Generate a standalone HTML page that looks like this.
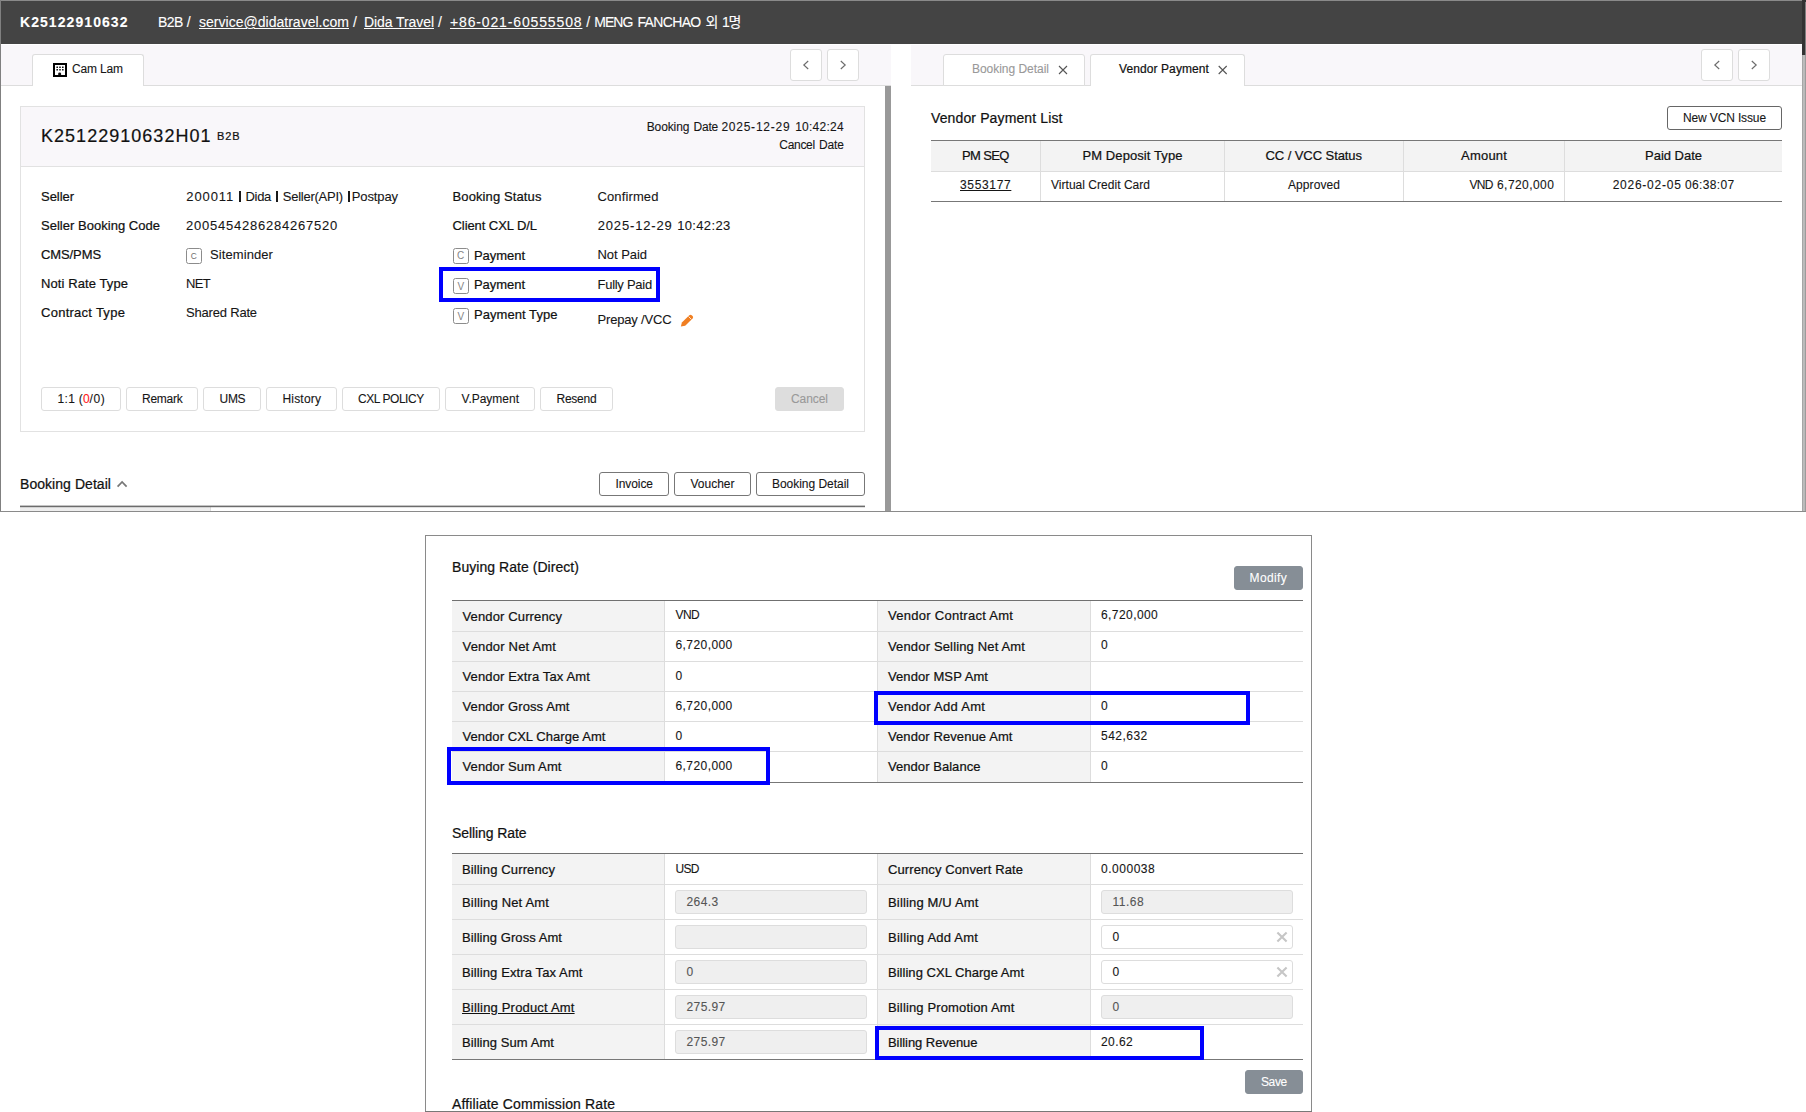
<!DOCTYPE html>
<html lang="en"><head><meta charset="utf-8"><title>Booking K25122910632</title>
<style>
html,body{margin:0;padding:0;background:#fff;}
body{width:1806px;height:1112px;position:relative;overflow:hidden;font-family:"Liberation Sans", "Noto Sans CJK KR", sans-serif;color:#161616;}
.b{position:absolute;box-sizing:border-box;}
.t{position:absolute;white-space:pre;line-height:1;font-family:"Liberation Sans", "Noto Sans CJK KR", sans-serif;}
svg{position:absolute;overflow:visible;}
</style></head><body>
<div class="b" style="left:0px;top:0px;width:1806px;height:512px;background:#fff;"></div>
<div class="b" style="left:0px;top:0px;width:1802px;height:43.6px;background:#444444;"></div>
<div class="b" style="left:0px;top:0px;width:1806px;height:1px;background:#8a8a8a;"></div>
<div class="b" style="left:1802px;top:0px;width:4px;height:55px;background:#333333;"></div>
<div class="b" style="left:1805px;top:2px;width:1px;height:53px;background:#808080;"></div>
<div class="b" style="left:1802px;top:55px;width:4px;height:457px;background:linear-gradient(90deg,#9a9a9a 0,#c8c8c8 50%,#8c8c8c 100%);"></div>
<div class="b" style="left:0px;top:0px;width:1px;height:512px;background:#808080;"></div>
<div class="b" style="left:0px;top:511px;width:1806px;height:1px;background:#8a8a8a;"></div>
<div class="b" style="left:1px;top:45px;width:890px;height:41px;background:#f9f7fa;"></div>
<div class="b" style="left:1px;top:85px;width:890px;height:1px;background:#dddddd;"></div>
<div class="b" style="left:32px;top:54px;width:112px;height:32px;background:#fff;border:1px solid #dddddd;border-bottom:none;border-radius:3px 3px 0 0;"></div>
<svg style="left:53px;top:63px" width="14" height="14" viewBox="0 0 14 14">
<rect x="1" y="1" width="12" height="12" fill="#fff" stroke="#000" stroke-width="2"/>
<g fill="#111"><rect x="3.4" y="3.5" width="1.6" height="1.6" rx="0.3"/><rect x="6.2" y="3.5" width="1.6" height="1.6" rx="0.3"/><rect x="9.0" y="3.5" width="1.6" height="1.6" rx="0.3"/>
<rect x="3.4" y="6.0" width="1.6" height="1.6" rx="0.3"/><rect x="6.2" y="6.0" width="1.6" height="1.6" rx="0.3"/><rect x="9.0" y="6.0" width="1.6" height="1.6" rx="0.3"/>
<path d="M5.2,12.2 V10.7 Q5.2,9.4 6.65,9.4 Q8.1,9.4 8.1,10.7 V12.2 Z"/></g></svg>
<div class="b" style="left:790px;top:49px;width:32px;height:32px;background:#fff;border:1px solid #dddddd;border-radius:3px;"></div>
<div class="b" style="left:827px;top:49px;width:32px;height:32px;background:#fff;border:1px solid #dddddd;border-radius:3px;"></div>
<svg style="left:0;top:0" width="1" height="1"><path d="M808.2,61 L803.8,65 L808.2,69" fill="none" stroke="#6c6c6c" stroke-width="1.15"/></svg>
<svg style="left:0;top:0" width="1" height="1"><path d="M840.8,61 L845.2,65 L840.8,69" fill="none" stroke="#6c6c6c" stroke-width="1.15"/></svg>
<div class="b" style="left:885px;top:86px;width:6px;height:425px;background:#999999;"></div>
<div class="b" style="left:20px;top:106px;width:845px;height:326px;background:#fff;border:1px solid #e2e2e2;"></div>
<div class="b" style="left:21px;top:107px;width:843px;height:59px;background:#f9f7fa;"></div>
<div class="b" style="left:21px;top:166px;width:843px;height:1px;background:#e2e2e2;"></div>
<div class="b" style="left:238.8px;top:191.3px;width:2.0px;height:10.5px;background:#1a1a1a;"></div>
<div class="b" style="left:276.1px;top:191.3px;width:2.0px;height:10.5px;background:#1a1a1a;"></div>
<div class="b" style="left:348.2px;top:191.3px;width:2.0px;height:10.5px;background:#1a1a1a;"></div>
<div class="b" style="left:186px;top:248px;width:16px;height:16px;background:#fff;border:1px solid #8c8c8c;border-radius:2.5px;"></div>
<div class="b" style="left:453px;top:248px;width:16px;height:16px;background:#fff;border:1px solid #8c8c8c;border-radius:2.5px;"></div>
<div class="b" style="left:453px;top:278px;width:16px;height:16px;background:#fff;border:1px solid #8c8c8c;border-radius:2.5px;"></div>
<div class="b" style="left:453px;top:308px;width:16px;height:16px;background:#fff;border:1px solid #8c8c8c;border-radius:2.5px;"></div>
<svg style="left:680px;top:314px" width="14" height="13" viewBox="0 0 14 13">
<path d="M0.9,12.4 L1.9,8.6 L9.3,1.2 Q10.5,0.1 11.7,1.2 L12.6,2.1 Q13.7,3.3 12.6,4.4 L5.2,11.7 Z" fill="#f07f22"/>
<path d="M8.5,2.5 L11.3,5.3" stroke="#fff" stroke-width="0.8"/></svg>
<div class="b" style="left:439px;top:267px;width:221px;height:35px;border:4px solid #0000ff;"></div>
<div class="b" style="left:41px;top:387px;width:80px;height:24px;background:#fff;border:1px solid #dddddd;border-radius:3px;"></div>
<div class="b" style="left:126px;top:387px;width:72px;height:24px;background:#fff;border:1px solid #dddddd;border-radius:3px;"></div>
<div class="b" style="left:203px;top:387px;width:58px;height:24px;background:#fff;border:1px solid #dddddd;border-radius:3px;"></div>
<div class="b" style="left:266px;top:387px;width:71px;height:24px;background:#fff;border:1px solid #dddddd;border-radius:3px;"></div>
<div class="b" style="left:342px;top:387px;width:98px;height:24px;background:#fff;border:1px solid #dddddd;border-radius:3px;"></div>
<div class="b" style="left:445px;top:387px;width:90px;height:24px;background:#fff;border:1px solid #dddddd;border-radius:3px;"></div>
<div class="b" style="left:540px;top:387px;width:73px;height:24px;background:#fff;border:1px solid #dddddd;border-radius:3px;"></div>
<div class="b" style="left:775px;top:387px;width:69px;height:24px;background:#dddddd;border:1px solid #dddddd;border-radius:3px;"></div>
<svg style="left:0;top:0" width="1" height="1"><path d="M117.6,486.6 L122.1,482 L126.6,486.6" fill="none" stroke="#777" stroke-width="1.7"/></svg>
<div class="b" style="left:599px;top:472px;width:70px;height:24px;background:#fff;border:1px solid #777;border-radius:3px;"></div>
<div class="b" style="left:674px;top:472px;width:77px;height:24px;background:#fff;border:1px solid #777;border-radius:3px;"></div>
<div class="b" style="left:756px;top:472px;width:109px;height:24px;background:#fff;border:1px solid #777;border-radius:3px;"></div>
<div class="b" style="left:20px;top:507px;width:190px;height:4px;background:#eeeeee;"></div>
<div class="b" style="left:210px;top:507px;width:1px;height:4px;background:#dddddd;"></div>
<svg style="left:0;top:0" width="1" height="1"><rect x="20" y="505.6" width="845" height="1.6" fill="#6c6c6c"/></svg>
<div class="b" style="left:911px;top:45px;width:891px;height:41px;background:#f9f7fa;"></div>
<div class="b" style="left:911px;top:85px;width:891px;height:1px;background:#dddddd;"></div>
<div class="b" style="left:943px;top:54px;width:142px;height:32px;background:#fff;border:1px solid #dddddd;border-radius:3px 3px 0 0;"></div>
<div class="b" style="left:1090px;top:54px;width:155px;height:32px;background:#fff;border:1px solid #dddddd;border-bottom:none;border-radius:3px 3px 0 0;"></div>
<svg style="left:0;top:0" width="1" height="1"><path d="M1059,66 L1067,74 M1067,66 L1059,74" fill="none" stroke="#555" stroke-width="1.1"/></svg>
<svg style="left:0;top:0" width="1" height="1"><path d="M1218.7,66 L1226.7,74 M1226.7,66 L1218.7,74" fill="none" stroke="#555" stroke-width="1.1"/></svg>
<div class="b" style="left:1701px;top:49px;width:32px;height:32px;background:#fff;border:1px solid #dddddd;border-radius:3px;"></div>
<div class="b" style="left:1738px;top:49px;width:32px;height:32px;background:#fff;border:1px solid #dddddd;border-radius:3px;"></div>
<svg style="left:0;top:0" width="1" height="1"><path d="M1719.2,61 L1714.8,65 L1719.2,69" fill="none" stroke="#6c6c6c" stroke-width="1.15"/></svg>
<svg style="left:0;top:0" width="1" height="1"><path d="M1751.8,61 L1756.2,65 L1751.8,69" fill="none" stroke="#6c6c6c" stroke-width="1.15"/></svg>
<div class="b" style="left:1667px;top:106px;width:115px;height:24px;background:#fff;border:1px solid #666;border-radius:3px;"></div>
<div class="b" style="left:931px;top:140px;width:851px;height:1px;background:#777777;"></div>
<div class="b" style="left:931px;top:141px;width:851px;height:30px;background:#f3f3f3;"></div>
<div class="b" style="left:931px;top:171px;width:851px;height:1px;background:#dddddd;"></div>
<div class="b" style="left:931px;top:201px;width:851px;height:1px;background:#777777;"></div>
<div class="b" style="left:1040px;top:141px;width:1px;height:60px;background:#dddddd;"></div>
<div class="b" style="left:1224px;top:141px;width:1px;height:60px;background:#dddddd;"></div>
<div class="b" style="left:1403px;top:141px;width:1px;height:60px;background:#dddddd;"></div>
<div class="b" style="left:1564px;top:141px;width:1px;height:60px;background:#dddddd;"></div>
<div class="b" style="left:425px;top:535px;width:887px;height:578px;background:#fff;border:1px solid #8a8a8a;"></div>
<div class="b" style="left:425px;top:1111px;width:887px;height:1px;background:#777;"></div>
<div class="b" style="left:1234px;top:566px;width:69px;height:24px;background:#868e96;border:1px solid #868e96;border-radius:3px;"></div>
<div class="b" style="left:452px;top:600px;width:851px;height:1px;background:#707070;"></div>
<div class="b" style="left:452px;top:601px;width:212px;height:181px;background:#f3f3f3;"></div>
<div class="b" style="left:878px;top:601px;width:212px;height:181px;background:#f3f3f3;"></div>
<div class="b" style="left:452px;top:631px;width:851px;height:1px;background:#dddddd;"></div>
<div class="b" style="left:452px;top:661px;width:851px;height:1px;background:#dddddd;"></div>
<div class="b" style="left:452px;top:691px;width:851px;height:1px;background:#dddddd;"></div>
<div class="b" style="left:452px;top:721px;width:851px;height:1px;background:#dddddd;"></div>
<div class="b" style="left:452px;top:751px;width:851px;height:1px;background:#dddddd;"></div>
<div class="b" style="left:452px;top:782px;width:851px;height:1px;background:#777777;"></div>
<div class="b" style="left:664px;top:601px;width:1px;height:181px;background:#dddddd;"></div>
<div class="b" style="left:877px;top:601px;width:1px;height:181px;background:#dddddd;"></div>
<div class="b" style="left:1090px;top:601px;width:1px;height:181px;background:#dddddd;"></div>
<div class="b" style="left:874px;top:691px;width:376px;height:34px;border:4px solid #0000ff;"></div>
<div class="b" style="left:447px;top:747px;width:323px;height:38px;border:4px solid #0000ff;"></div>
<div class="b" style="left:452px;top:853px;width:851px;height:1px;background:#707070;"></div>
<div class="b" style="left:452px;top:854px;width:212px;height:205px;background:#f3f3f3;"></div>
<div class="b" style="left:878px;top:854px;width:212px;height:205px;background:#f3f3f3;"></div>
<div class="b" style="left:452px;top:884px;width:851px;height:1px;background:#dddddd;"></div>
<div class="b" style="left:452px;top:919px;width:851px;height:1px;background:#dddddd;"></div>
<div class="b" style="left:452px;top:954px;width:851px;height:1px;background:#dddddd;"></div>
<div class="b" style="left:452px;top:989px;width:851px;height:1px;background:#dddddd;"></div>
<div class="b" style="left:452px;top:1024px;width:851px;height:1px;background:#dddddd;"></div>
<div class="b" style="left:452px;top:1059px;width:851px;height:1px;background:#777777;"></div>
<div class="b" style="left:664px;top:854px;width:1px;height:205px;background:#dddddd;"></div>
<div class="b" style="left:877px;top:854px;width:1px;height:205px;background:#dddddd;"></div>
<div class="b" style="left:1090px;top:854px;width:1px;height:205px;background:#dddddd;"></div>
<div class="b" style="left:675px;top:890px;width:192px;height:24px;background:#efefef;border:1px solid #dddddd;border-radius:3px;"></div>
<div class="b" style="left:675px;top:925px;width:192px;height:24px;background:#efefef;border:1px solid #dddddd;border-radius:3px;"></div>
<div class="b" style="left:675px;top:960px;width:192px;height:24px;background:#efefef;border:1px solid #dddddd;border-radius:3px;"></div>
<div class="b" style="left:675px;top:995px;width:192px;height:24px;background:#efefef;border:1px solid #dddddd;border-radius:3px;"></div>
<div class="b" style="left:675px;top:1030px;width:192px;height:24px;background:#efefef;border:1px solid #dddddd;border-radius:3px;"></div>
<div class="b" style="left:1101px;top:890px;width:192px;height:24px;background:#efefef;border:1px solid #dddddd;border-radius:3px;"></div>
<div class="b" style="left:1101px;top:925px;width:192px;height:24px;background:#fff;border:1px solid #dddddd;border-radius:3px;"></div>
<svg style="left:0;top:0" width="1" height="1"><path d="M1277.4,932.4 L1286.6000000000001,941.6 M1286.6000000000001,932.4 L1277.4,941.6" fill="none" stroke="#c6c6c6" stroke-width="2.1"/></svg>
<div class="b" style="left:1101px;top:960px;width:192px;height:24px;background:#fff;border:1px solid #dddddd;border-radius:3px;"></div>
<svg style="left:0;top:0" width="1" height="1"><path d="M1277.4,967.4 L1286.6000000000001,976.6 M1286.6000000000001,967.4 L1277.4,976.6" fill="none" stroke="#c6c6c6" stroke-width="2.1"/></svg>
<div class="b" style="left:1101px;top:995px;width:192px;height:24px;background:#efefef;border:1px solid #dddddd;border-radius:3px;"></div>
<div class="b" style="left:875px;top:1026px;width:329px;height:34px;border:4px solid #0000ff;"></div>
<div class="b" style="left:1245px;top:1070px;width:58px;height:24px;background:#868e96;border:1px solid #868e96;border-radius:3px;"></div>
<span class="t" style="left:20px;top:15.15px;font-size:14px;font-weight:700;color:#fff;letter-spacing:1.064px;-webkit-text-stroke:0.1px currentColor;">K25122910632</span>
<span class="t" style="left:158px;top:15.15px;font-size:14px;color:#fff;letter-spacing:-0.508px;-webkit-text-stroke:0.1px currentColor;">B2B</span>
<span class="t" style="left:186.7px;top:15.15px;font-size:14px;color:#fff;-webkit-text-stroke:0.1px currentColor;">/</span>
<span class="t" style="left:199px;top:15.15px;font-size:14px;color:#fff;letter-spacing:0.018px;text-decoration:underline;-webkit-text-stroke:0.1px currentColor;">service@didatravel.com</span>
<span class="t" style="left:353px;top:15.15px;font-size:14px;color:#fff;-webkit-text-stroke:0.1px currentColor;">/</span>
<span class="t" style="left:364px;top:15.15px;font-size:14px;color:#fff;letter-spacing:-0.077px;text-decoration:underline;-webkit-text-stroke:0.1px currentColor;">Dida Travel</span>
<span class="t" style="left:438px;top:15.15px;font-size:14px;color:#fff;-webkit-text-stroke:0.1px currentColor;">/</span>
<span class="t" style="left:450px;top:15.15px;font-size:14px;color:#fff;letter-spacing:0.856px;text-decoration:underline;-webkit-text-stroke:0.1px currentColor;">+86-021-60555508</span>
<span class="t" style="left:586.3px;top:15.15px;font-size:14px;color:#fff;-webkit-text-stroke:0.1px currentColor;">/</span>
<span class="t" style="left:594.2px;top:15.15px;font-size:14px;color:#fff;letter-spacing:-0.943px;-webkit-text-stroke:0.1px currentColor;">MENG</span>
<span class="t" style="left:637.5px;top:15.15px;font-size:14px;color:#fff;letter-spacing:-0.660px;-webkit-text-stroke:0.1px currentColor;">FANCHAO</span>
<span class="t" style="left:705.5px;top:15.15px;font-size:14px;color:#fff;-webkit-text-stroke:0.1px currentColor;">외</span>
<span class="t" style="left:722px;top:15.15px;font-size:14px;color:#fff;letter-spacing:-1.200px;-webkit-text-stroke:0.1px currentColor;">1명</span>
<span class="t" style="left:72px;top:62.84px;font-size:12px;letter-spacing:-0.156px;-webkit-text-stroke:0.1px currentColor;">Cam Lam</span>
<span class="t" style="left:41px;top:126.76px;font-size:18px;color:#111;letter-spacing:1.024px;-webkit-text-stroke:0.2px currentColor;">K25122910632H01</span>
<span class="t" style="left:217px;top:130.69px;font-size:11px;color:#111;letter-spacing:0.881px;-webkit-text-stroke:0.22px currentColor;">B2B</span>
<span class="t" style="left:646.7px;top:120.84px;font-size:12px;letter-spacing:-0.104px;-webkit-text-stroke:0.1px currentColor;">Booking</span>
<span class="t" style="left:693.5px;top:120.84px;font-size:12px;letter-spacing:-0.217px;-webkit-text-stroke:0.1px currentColor;">Date</span>
<span class="t" style="left:721.4px;top:120.84px;font-size:12px;letter-spacing:0.759px;-webkit-text-stroke:0.1px currentColor;">2025-12-29</span>
<span class="t" style="left:795.2px;top:120.84px;font-size:12px;letter-spacing:0.251px;-webkit-text-stroke:0.1px currentColor;">10:42:24</span>
<span class="t" style="left:779.3px;top:138.84px;font-size:12px;letter-spacing:-0.302px;-webkit-text-stroke:0.1px currentColor;">Cancel</span>
<span class="t" style="left:819px;top:138.84px;font-size:12px;letter-spacing:-0.160px;-webkit-text-stroke:0.1px currentColor;">Date</span>
<span class="t" style="left:41px;top:190.00px;font-size:13px;color:#111;letter-spacing:-0.045px;-webkit-text-stroke:0.22px currentColor;">Seller</span>
<span class="t" style="left:41px;top:219.00px;font-size:13px;color:#111;letter-spacing:0.025px;-webkit-text-stroke:0.22px currentColor;">Seller Booking Code</span>
<span class="t" style="left:41px;top:248.00px;font-size:13px;color:#111;letter-spacing:-0.103px;-webkit-text-stroke:0.22px currentColor;">CMS/PMS</span>
<span class="t" style="left:41px;top:277.00px;font-size:13px;color:#111;letter-spacing:0.091px;-webkit-text-stroke:0.22px currentColor;">Noti Rate Type</span>
<span class="t" style="left:41px;top:306.00px;font-size:13px;color:#111;letter-spacing:0.264px;-webkit-text-stroke:0.22px currentColor;">Contract Type</span>
<span class="t" style="left:186.3px;top:190.00px;font-size:13px;letter-spacing:0.887px;-webkit-text-stroke:0.1px currentColor;">200011</span>
<span class="t" style="left:245.4px;top:190.00px;font-size:13px;letter-spacing:-0.271px;-webkit-text-stroke:0.1px currentColor;">Dida</span>
<span class="t" style="left:282.8px;top:190.00px;font-size:13px;letter-spacing:-0.253px;-webkit-text-stroke:0.1px currentColor;">Seller(API)</span>
<span class="t" style="left:351.8px;top:190.00px;font-size:13px;letter-spacing:-0.121px;-webkit-text-stroke:0.1px currentColor;">Postpay</span>
<span class="t" style="left:186px;top:219.00px;font-size:13px;letter-spacing:0.764px;-webkit-text-stroke:0.1px currentColor;">2005454286284267520</span>
<span class="t" style="left:210px;top:248.00px;font-size:13px;letter-spacing:0.090px;-webkit-text-stroke:0.1px currentColor;">Siteminder</span>
<span class="t" style="left:186px;top:277.00px;font-size:13px;letter-spacing:-0.600px;-webkit-text-stroke:0.1px currentColor;">NET</span>
<span class="t" style="left:186px;top:306.00px;font-size:13px;letter-spacing:-0.190px;-webkit-text-stroke:0.1px currentColor;">Shared Rate</span>
<span class="t" style="left:190.7px;top:251.59px;font-size:8.4px;color:#707070;">C</span>
<span class="t" style="left:452.5px;top:190.00px;font-size:13px;color:#111;letter-spacing:0.115px;-webkit-text-stroke:0.22px currentColor;">Booking Status</span>
<span class="t" style="left:452.5px;top:219.00px;font-size:13px;color:#111;letter-spacing:-0.074px;-webkit-text-stroke:0.22px currentColor;">Client CXL D/L</span>
<span class="t" style="left:597.5px;top:190.00px;font-size:13px;letter-spacing:0.121px;-webkit-text-stroke:0.1px currentColor;">Confirmed</span>
<span class="t" style="left:597.7px;top:219.00px;font-size:13px;letter-spacing:0.842px;-webkit-text-stroke:0.1px currentColor;">2025-12-29</span>
<span class="t" style="left:677.2px;top:219.00px;font-size:13px;letter-spacing:0.345px;-webkit-text-stroke:0.1px currentColor;">10:42:23</span>
<span class="t" style="left:457.0px;top:251.14px;font-size:10px;color:#858585;">C</span>
<span class="t" style="left:457.4px;top:281.54px;font-size:10px;color:#858585;">V</span>
<span class="t" style="left:457.4px;top:311.54px;font-size:10px;color:#858585;">V</span>
<span class="t" style="left:474px;top:249.00px;font-size:13px;color:#111;letter-spacing:-0.048px;-webkit-text-stroke:0.22px currentColor;">Payment</span>
<span class="t" style="left:474px;top:278.00px;font-size:13px;color:#111;letter-spacing:-0.048px;-webkit-text-stroke:0.22px currentColor;">Payment</span>
<span class="t" style="left:474px;top:308.00px;font-size:13px;color:#111;letter-spacing:0.054px;-webkit-text-stroke:0.22px currentColor;">Payment Type</span>
<span class="t" style="left:597.5px;top:248.00px;font-size:13px;letter-spacing:-0.050px;-webkit-text-stroke:0.1px currentColor;">Not Paid</span>
<span class="t" style="left:597.5px;top:278.00px;font-size:13px;letter-spacing:-0.271px;-webkit-text-stroke:0.1px currentColor;">Fully Paid</span>
<span class="t" style="left:597.5px;top:313.00px;font-size:13px;letter-spacing:-0.179px;-webkit-text-stroke:0.1px currentColor;">Prepay /VCC</span>
<span class="t" style="left:0px;top:393.14px;font-size:12px;-webkit-text-stroke:0.1px currentColor;"></span>
<span class="t" style="left:57.5px;top:393.14px;font-size:12px;letter-spacing:0.330px;-webkit-text-stroke:0.1px currentColor;">1:1 (</span>
<span class="t" style="left:83px;top:393.14px;font-size:12px;color:#ff2020;-webkit-text-stroke:0.1px currentColor;">0</span>
<span class="t" style="left:89.5px;top:393.14px;font-size:12px;letter-spacing:0.594px;-webkit-text-stroke:0.1px currentColor;">/0)</span>
<span class="t" style="left:142px;top:393.14px;font-size:12px;letter-spacing:-0.276px;-webkit-text-stroke:0.1px currentColor;">Remark</span>
<span class="t" style="left:219.5px;top:393.14px;font-size:12px;letter-spacing:-0.269px;-webkit-text-stroke:0.1px currentColor;">UMS</span>
<span class="t" style="left:282.5px;top:393.14px;font-size:12px;letter-spacing:0.178px;-webkit-text-stroke:0.1px currentColor;">History</span>
<span class="t" style="left:358px;top:393.14px;font-size:12px;letter-spacing:-0.447px;-webkit-text-stroke:0.1px currentColor;">CXL POLICY</span>
<span class="t" style="left:461.5px;top:393.14px;font-size:12px;letter-spacing:-0.011px;-webkit-text-stroke:0.1px currentColor;">V.Payment</span>
<span class="t" style="left:556.5px;top:393.14px;font-size:12px;letter-spacing:-0.250px;-webkit-text-stroke:0.1px currentColor;">Resend</span>
<span class="t" style="left:791px;top:393.14px;font-size:12px;color:#999;letter-spacing:-0.065px;-webkit-text-stroke:0.1px currentColor;">Cancel</span>
<span class="t" style="left:20px;top:477.15px;font-size:14px;color:#111;letter-spacing:0.053px;-webkit-text-stroke:0.22px currentColor;">Booking Detail</span>
<span class="t" style="left:615.5px;top:478.14px;font-size:12px;letter-spacing:-0.082px;-webkit-text-stroke:0.1px currentColor;">Invoice</span>
<span class="t" style="left:690.5px;top:478.14px;font-size:12px;letter-spacing:-0.007px;-webkit-text-stroke:0.1px currentColor;">Voucher</span>
<span class="t" style="left:772px;top:478.14px;font-size:12px;letter-spacing:-0.029px;-webkit-text-stroke:0.1px currentColor;">Booking Detail</span>
<span class="t" style="left:972px;top:62.84px;font-size:12px;color:#999;letter-spacing:-0.029px;-webkit-text-stroke:0.1px currentColor;">Booking Detail</span>
<span class="t" style="left:1119px;top:62.84px;font-size:12px;color:#111;letter-spacing:0.094px;-webkit-text-stroke:0.2px currentColor;">Vendor Payment</span>
<span class="t" style="left:931px;top:111.15px;font-size:14px;color:#111;letter-spacing:0.125px;-webkit-text-stroke:0.22px currentColor;">Vendor Payment List</span>
<span class="t" style="left:1683px;top:112.14px;font-size:12px;letter-spacing:-0.136px;-webkit-text-stroke:0.1px currentColor;">New VCN Issue</span>
<span class="t" style="left:962px;top:149.00px;font-size:13px;color:#111;letter-spacing:-0.651px;-webkit-text-stroke:0.22px currentColor;">PM SEQ</span>
<span class="t" style="left:1082.5px;top:149.00px;font-size:13px;color:#111;letter-spacing:0.085px;-webkit-text-stroke:0.22px currentColor;">PM Deposit Type</span>
<span class="t" style="left:1265.5px;top:149.00px;font-size:13px;color:#111;letter-spacing:-0.071px;-webkit-text-stroke:0.22px currentColor;">CC / VCC Status</span>
<span class="t" style="left:1461px;top:149.00px;font-size:13px;color:#111;letter-spacing:0.216px;-webkit-text-stroke:0.22px currentColor;">Amount</span>
<span class="t" style="left:1645px;top:149.00px;font-size:13px;color:#111;letter-spacing:-0.011px;-webkit-text-stroke:0.22px currentColor;">Paid Date</span>
<span class="t" style="left:960px;top:178.84px;font-size:12px;letter-spacing:0.659px;text-decoration:underline;-webkit-text-stroke:0.1px currentColor;">3553177</span>
<span class="t" style="left:1051px;top:178.84px;font-size:12px;letter-spacing:0.028px;-webkit-text-stroke:0.1px currentColor;">Virtual Credit Card</span>
<span class="t" style="left:1288px;top:178.84px;font-size:12px;letter-spacing:0.083px;-webkit-text-stroke:0.1px currentColor;">Approved</span>
<span class="t" style="left:1469.4px;top:178.84px;font-size:12px;letter-spacing:-0.698px;-webkit-text-stroke:0.1px currentColor;">VND</span>
<span class="t" style="left:1497px;top:178.84px;font-size:12px;letter-spacing:0.436px;-webkit-text-stroke:0.1px currentColor;">6,720,000</span>
<span class="t" style="left:1612.7px;top:178.84px;font-size:12px;letter-spacing:0.748px;-webkit-text-stroke:0.1px currentColor;">2026-02-05</span>
<span class="t" style="left:1685px;top:178.84px;font-size:12px;letter-spacing:0.358px;-webkit-text-stroke:0.1px currentColor;">06:38:07</span>
<span class="t" style="left:452px;top:560.15px;font-size:14px;color:#111;letter-spacing:0.049px;-webkit-text-stroke:0.22px currentColor;">Buying Rate (Direct)</span>
<span class="t" style="left:1249.5px;top:572.14px;font-size:12px;color:#fff;letter-spacing:0.392px;-webkit-text-stroke:0.1px currentColor;">Modify</span>
<span class="t" style="left:462.5px;top:610.00px;font-size:13px;color:#111;letter-spacing:0.134px;-webkit-text-stroke:0.22px currentColor;">Vendor Currency</span>
<span class="t" style="left:675.5px;top:609.04px;font-size:12px;letter-spacing:-0.537px;-webkit-text-stroke:0.1px currentColor;">VND</span>
<span class="t" style="left:888px;top:609.00px;font-size:13px;color:#111;letter-spacing:0.273px;-webkit-text-stroke:0.22px currentColor;">Vendor Contract Amt</span>
<span class="t" style="left:1101px;top:609.04px;font-size:12px;letter-spacing:0.425px;-webkit-text-stroke:0.1px currentColor;">6,720,000</span>
<span class="t" style="left:462.5px;top:640.00px;font-size:13px;color:#111;letter-spacing:0.181px;-webkit-text-stroke:0.22px currentColor;">Vendor Net Amt</span>
<span class="t" style="left:675.5px;top:638.74px;font-size:12px;letter-spacing:0.425px;-webkit-text-stroke:0.1px currentColor;">6,720,000</span>
<span class="t" style="left:888px;top:640.00px;font-size:13px;color:#111;letter-spacing:0.153px;-webkit-text-stroke:0.22px currentColor;">Vendor Selling Net Amt</span>
<span class="t" style="left:1101px;top:638.74px;font-size:12px;-webkit-text-stroke:0.1px currentColor;">0</span>
<span class="t" style="left:462.5px;top:670.00px;font-size:13px;color:#111;letter-spacing:0.139px;-webkit-text-stroke:0.22px currentColor;">Vendor Extra Tax Amt</span>
<span class="t" style="left:675.5px;top:669.54px;font-size:12px;-webkit-text-stroke:0.1px currentColor;">0</span>
<span class="t" style="left:888px;top:670.00px;font-size:13px;color:#111;letter-spacing:0.091px;-webkit-text-stroke:0.22px currentColor;">Vendor MSP Amt</span>
<span class="t" style="left:462.5px;top:700.00px;font-size:13px;color:#111;letter-spacing:0.097px;-webkit-text-stroke:0.22px currentColor;">Vendor Gross Amt</span>
<span class="t" style="left:675.5px;top:699.74px;font-size:12px;letter-spacing:0.425px;-webkit-text-stroke:0.1px currentColor;">6,720,000</span>
<span class="t" style="left:888px;top:700.00px;font-size:13px;color:#111;letter-spacing:0.279px;-webkit-text-stroke:0.22px currentColor;">Vendor Add Amt</span>
<span class="t" style="left:1101px;top:699.74px;font-size:12px;-webkit-text-stroke:0.1px currentColor;">0</span>
<span class="t" style="left:462.5px;top:730.00px;font-size:13px;color:#111;letter-spacing:0.054px;-webkit-text-stroke:0.22px currentColor;">Vendor CXL Charge Amt</span>
<span class="t" style="left:675.5px;top:729.84px;font-size:12px;-webkit-text-stroke:0.1px currentColor;">0</span>
<span class="t" style="left:888px;top:730.00px;font-size:13px;color:#111;letter-spacing:0.094px;-webkit-text-stroke:0.22px currentColor;">Vendor Revenue Amt</span>
<span class="t" style="left:1101px;top:729.84px;font-size:12px;letter-spacing:0.478px;-webkit-text-stroke:0.1px currentColor;">542,632</span>
<span class="t" style="left:462.5px;top:760.00px;font-size:13px;color:#111;letter-spacing:0.106px;-webkit-text-stroke:0.22px currentColor;">Vendor Sum Amt</span>
<span class="t" style="left:675.5px;top:759.84px;font-size:12px;letter-spacing:0.425px;-webkit-text-stroke:0.1px currentColor;">6,720,000</span>
<span class="t" style="left:888px;top:760.00px;font-size:13px;color:#111;letter-spacing:0.052px;-webkit-text-stroke:0.22px currentColor;">Vendor Balance</span>
<span class="t" style="left:1101px;top:759.84px;font-size:12px;-webkit-text-stroke:0.1px currentColor;">0</span>
<span class="t" style="left:452px;top:826.15px;font-size:14px;color:#111;letter-spacing:-0.087px;-webkit-text-stroke:0.22px currentColor;">Selling Rate</span>
<span class="t" style="left:462px;top:863.00px;font-size:13px;color:#111;letter-spacing:0.126px;-webkit-text-stroke:0.22px currentColor;">Billing Currency</span>
<span class="t" style="left:888px;top:863.00px;font-size:13px;color:#111;letter-spacing:0.100px;-webkit-text-stroke:0.22px currentColor;">Currency Convert Rate</span>
<span class="t" style="left:462px;top:896.00px;font-size:13px;color:#111;letter-spacing:0.169px;-webkit-text-stroke:0.22px currentColor;">Billing Net Amt</span>
<span class="t" style="left:888px;top:896.00px;font-size:13px;color:#111;letter-spacing:0.163px;-webkit-text-stroke:0.22px currentColor;">Billing M/U Amt</span>
<span class="t" style="left:462px;top:931.00px;font-size:13px;color:#111;letter-spacing:0.062px;-webkit-text-stroke:0.22px currentColor;">Billing Gross Amt</span>
<span class="t" style="left:888px;top:931.00px;font-size:13px;color:#111;letter-spacing:0.226px;-webkit-text-stroke:0.22px currentColor;">Billing Add Amt</span>
<span class="t" style="left:462px;top:966.00px;font-size:13px;color:#111;letter-spacing:0.109px;-webkit-text-stroke:0.22px currentColor;">Billing Extra Tax Amt</span>
<span class="t" style="left:888px;top:966.00px;font-size:13px;color:#111;letter-spacing:0.030px;-webkit-text-stroke:0.22px currentColor;">Billing CXL Charge Amt</span>
<span class="t" style="left:462px;top:1001.00px;font-size:13px;color:#111;letter-spacing:0.183px;text-decoration:underline;-webkit-text-stroke:0.22px currentColor;">Billing Product Amt</span>
<span class="t" style="left:888px;top:1001.00px;font-size:13px;color:#111;letter-spacing:0.143px;-webkit-text-stroke:0.22px currentColor;">Billing Promotion Amt</span>
<span class="t" style="left:462px;top:1036.00px;font-size:13px;color:#111;letter-spacing:0.066px;-webkit-text-stroke:0.22px currentColor;">Billing Sum Amt</span>
<span class="t" style="left:888px;top:1036.00px;font-size:13px;color:#111;letter-spacing:-0.058px;-webkit-text-stroke:0.22px currentColor;">Billing Revenue</span>
<span class="t" style="left:675.5px;top:862.84px;font-size:12px;letter-spacing:-0.738px;-webkit-text-stroke:0.1px currentColor;">USD</span>
<span class="t" style="left:1101px;top:862.84px;font-size:12px;letter-spacing:0.525px;-webkit-text-stroke:0.1px currentColor;">0.000038</span>
<span class="t" style="left:1101px;top:1035.84px;font-size:12px;letter-spacing:0.438px;-webkit-text-stroke:0.1px currentColor;">20.62</span>
<span class="t" style="left:686.5px;top:895.84px;font-size:12px;color:#555;letter-spacing:0.438px;-webkit-text-stroke:0.1px currentColor;">264.3</span>
<span class="t" style="left:686.5px;top:965.84px;font-size:12px;color:#555;-webkit-text-stroke:0.1px currentColor;">0</span>
<span class="t" style="left:686.5px;top:1000.84px;font-size:12px;color:#555;letter-spacing:0.418px;-webkit-text-stroke:0.1px currentColor;">275.97</span>
<span class="t" style="left:686.5px;top:1035.84px;font-size:12px;color:#555;letter-spacing:0.418px;-webkit-text-stroke:0.1px currentColor;">275.97</span>
<span class="t" style="left:1112.5px;top:895.84px;font-size:12px;color:#555;letter-spacing:0.524px;-webkit-text-stroke:0.1px currentColor;">11.68</span>
<span class="t" style="left:1112.5px;top:930.84px;font-size:12px;-webkit-text-stroke:0.1px currentColor;">0</span>
<span class="t" style="left:1112.5px;top:965.84px;font-size:12px;-webkit-text-stroke:0.1px currentColor;">0</span>
<span class="t" style="left:1112.5px;top:1000.84px;font-size:12px;color:#555;-webkit-text-stroke:0.1px currentColor;">0</span>
<span class="t" style="left:1261px;top:1076.14px;font-size:12px;color:#fff;letter-spacing:-0.388px;-webkit-text-stroke:0.1px currentColor;">Save</span>
<span class="t" style="left:452px;top:1097.15px;font-size:14px;color:#111;letter-spacing:0.121px;-webkit-text-stroke:0.22px currentColor;">Affiliate Commission Rate</span>
</body></html>
